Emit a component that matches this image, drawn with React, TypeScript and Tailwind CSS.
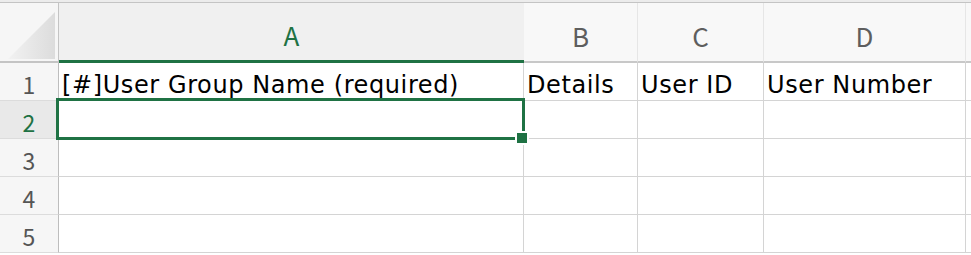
const GREEN = 'text-[#1f7244]';

const cols = [
  { key: 'A', width: 'w-[465px]', text: '[#]User Group Name (required)' },
  { key: 'B', width: 'w-[114px]', text: 'Details' },
  { key: 'C', width: 'w-[126px]', text: 'User ID' },
  { key: 'D', width: 'w-[202px]', text: 'User Number' },
];

const headFont = { fontFamily: '"Noto Sans CJK JP", "Noto Sans", sans-serif' };
const cellFont = { fontFamily: '"DejaVu Sans", "Noto Sans CJK JP", sans-serif' };

function CornerCell() {
  return (
    <div className="relative flex h-full w-[59px] shrink-0 items-end border-r border-b-2 border-[#c4c4c4] bg-[#f6f6f6] pb-[2px] pl-[8px]">
      <svg width="47" height="47" viewBox="0 0 47 47">
        <defs>
          <linearGradient id="tri" x1="0" y1="0" x2="1" y2="0">
            <stop offset="0" stopColor="#f2f2f2" />
            <stop offset="1" stopColor="#dcdcdc" />
          </linearGradient>
        </defs>
        <polygon points="0,47 47,0 47,47" fill="url(#tri)" />
      </svg>
    </div>
  );
}

export default function App() {
  return (
    <div className="h-[255px] w-[971px] overflow-hidden bg-white" style={headFont}>
      <div className="h-[2px] bg-[#ececec]" />
      <div className="h-px bg-[#c4c4c4]" />

      {/* column headers */}
      <div className="flex h-[60px]">
        <CornerCell />
        {cols.map((c) => (
          <div
            key={c.key}
            className={`flex shrink-0 items-center justify-center pt-[6px] text-[26px] ${c.width} ${
              c.key === 'A'
                ? 'border-b-[3px] border-[#1f7244] bg-[#f0f0f0] text-[#1f7244]'
                : 'border-r border-b-2 border-r-[#e6e6e6] border-b-[#c8c8c8] bg-[#f8f8f8] text-[#5e5e5e]'
            }`}
          >
            {c.key}
          </div>
        ))}
        <div className="flex-1 border-b-2 border-[#c8c8c8] bg-[#f8f8f8]" />
      </div>

      {[1, 2, 3, 4, 5].map((r) => (
        <div key={r} className="flex h-[38px]">
          <div
            className={`flex w-[59px] shrink-0 items-center justify-center border-r border-b border-r-[#bdbdbd] border-b-[#dcdcdc] pt-[5px] text-[23px] ${
              r === 2 ? `bg-[#e9e9e9] ${GREEN}` : 'bg-[#f6f6f6] text-[#555555]'
            }`}
          >
            {r}
          </div>
          {cols.map((c) => (
            <div
              key={c.key}
              className={`relative flex shrink-0 items-end border-r border-b border-[#d4d4d4] pb-[3px] pl-[3px] text-[24px] leading-none tracking-[0.6px] text-black ${c.width}`}
              style={cellFont}
            >
              {r === 1 && <span className="whitespace-nowrap">{c.text}</span>}
              {r === 2 && c.key === 'A' && (
                <div className="absolute -top-[3px] -left-[3px] -right-[2px] -bottom-[2px] z-10 border-[3px] border-[#1f7244]">
                  <div className="absolute -right-[7px] -bottom-[8px] h-[14px] w-[14px] border-2 border-white bg-[#1f7244]" />
                </div>
              )}
            </div>
          ))}
          <div className="flex-1 border-b border-[#d4d4d4]" />
        </div>
      ))}
    </div>
  );
}
